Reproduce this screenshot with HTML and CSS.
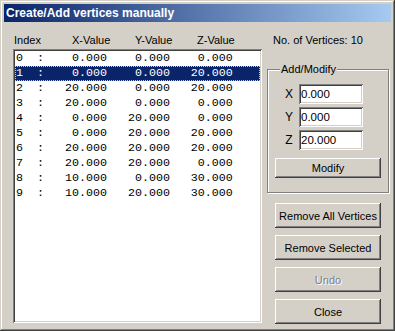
FILE: index.html
```html
<!DOCTYPE html>
<html lang="en">
<head>
  <meta charset="UTF-8">
  <title>Create/Add vertices manually</title>
  <link rel="stylesheet" href="styles.css">
</head>
<body>
  <div class="window">
    <div class="titlebar">Create/Add vertices manually</div>

    <div class="client">
      <div class="list-pane">
        <div class="list-head">
          <span>Index</span>
          <span>X-Value</span>
          <span>Y-Value</span>
          <span>Z-Value</span>
        </div>
        <div class="listbox">
          <div class="row">0  :    0.000    0.000    0.000</div>
          <div class="row selected">1  :    0.000    0.000   20.000</div>
          <div class="row">2  :   20.000    0.000   20.000</div>
          <div class="row">3  :   20.000    0.000    0.000</div>
          <div class="row">4  :    0.000   20.000    0.000</div>
          <div class="row">5  :    0.000   20.000   20.000</div>
          <div class="row">6  :   20.000   20.000   20.000</div>
          <div class="row">7  :   20.000   20.000    0.000</div>
          <div class="row">8  :   10.000    0.000   30.000</div>
          <div class="row">9  :   10.000   20.000   30.000</div>
        </div>
      </div>

      <div class="side">
        <div class="count">No. of Vertices: 10</div>

        <fieldset class="group">
          <legend>Add/Modify</legend>
          <div class="field"><label>X</label><input type="text" value="0.000"></div>
          <div class="field"><label>Y</label><input type="text" value="0.000"></div>
          <div class="field"><label>Z</label><input type="text" value="20.000"></div>
          <button class="btn btn-modify">Modify</button>
        </fieldset>

        <div class="actions">
          <button class="btn">Remove All Vertices</button>
          <button class="btn">Remove Selected</button>
          <button class="btn disabled">Undo</button>
          <button class="btn">Close</button>
        </div>
      </div>
    </div>
  </div>
</body>
</html>
```

FILE: styles.css
```css
* {
  box-sizing: border-box;
}
body {
  margin: 0;
  background: #d4d0c8;
  font-family: 'Liberation Sans', Arial, sans-serif;
  font-size: 11px;
  color: #000;
}
.window {
  width: 395px;
  height: 331px;
  padding: 4px;
  background: #d4d0c8;
  box-shadow: inset -1px -1px #404040, inset 1px 1px #d4d0c8,
              inset -2px -2px #808080, inset 2px 2px #fff;
  display: flex;
  flex-direction: column;
}
.titlebar {
  height: 18px;
  line-height: 18px;
  padding-left: 2px;
  background: linear-gradient(to right, #0a246a, #a6caf0);
  color: #fff;
  font-weight: bold;
  font-size: 12px;
}
.client {
  display: flex;
  flex: 1;
}
.list-pane {
  padding: 12px 0 0 9px;
}
.list-head {
  display: grid;
  grid-template-columns: 58px 63px 62px auto;
  padding-left: 1px;
  height: 13px;
  line-height: 13px;
}
.listbox {
  margin-top: 2px;
  width: 249px;
  height: 274px;
  padding: 2px;
  background: #fff;
  box-shadow: inset 1px 1px #808080, inset -1px -1px #fff,
              inset 2px 2px #404040, inset -2px -2px #d4d0c8;
}
.row {
  height: 15px;
  line-height: 15px;
  padding-left: 1px;
  white-space: pre;
  font-family: 'Liberation Mono', 'Courier New', monospace;
  font-size: 11.67px;
}
.row.selected {
  background: #0a246a;
  color: #fff;
  outline: 1px dotted #c8c8d8;
  outline-offset: -1px;
}
.side {
  width: 122px;
  margin-left: 5px;
  padding-top: 12px;
}
.count {
  height: 13px;
  line-height: 13px;
  padding-left: 6px;
}
.group {
  margin: 16px 0 0 0;
  padding: 8px 7px 14px 7px;
  width: 121px;
  border: 1px solid #808080;
  box-shadow: inset 1px 1px #fff, 1px 1px #fff;
}
.group legend {
  margin-left: 5px;
  padding: 0 1px;
  line-height: 13px;
  background: #d4d0c8;
}
.field {
  display: flex;
  align-items: center;
  gap: 5px;
  padding-left: 9px;
  margin-bottom: 3px;
}
.field label {
  width: 10px;
  text-align: center;
  font-size: 12px;
}
.field input {
  width: 64px;
  height: 20px;
  padding: 0 2px;
  border: none;
  background: #fff;
  font-family: 'Liberation Sans', Arial, sans-serif;
  font-size: 11.5px;
  box-shadow: inset 1px 1px #808080, inset -1px -1px #fff,
              inset 2px 2px #404040, inset -2px -2px #d4d0c8;
  outline: none;
}
.btn {
  display: block;
  width: 106px;
  height: 25px;
  padding: 0;
  border: none;
  background: #d4d0c8;
  font-family: 'Liberation Sans', Arial, sans-serif;
  font-size: 11px;
  color: #000;
  box-shadow: inset -1px -1px #404040, inset 1px 1px #fff,
              inset -2px -2px #808080, inset 2px 2px #d4d0c8;
}
.btn-modify {
  height: 20px;
  margin-top: 8px;
}
.actions {
  display: flex;
  flex-direction: column;
  gap: 7px;
  margin-top: 10px;
  padding-left: 8px;
}
.btn.disabled {
  color: #808080;
  text-shadow: 1px 1px #fff;
}
```
